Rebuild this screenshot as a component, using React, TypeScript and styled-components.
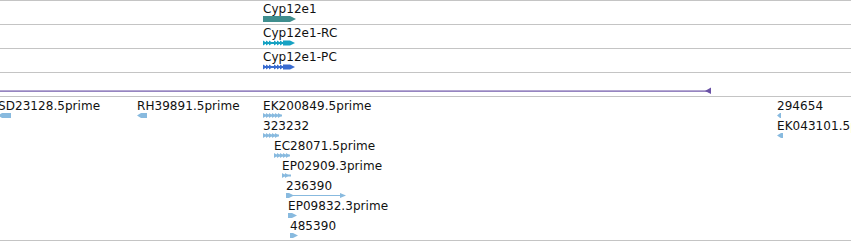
import React from "react";
import styled, { createGlobalStyle } from "styled-components";

const GlobalStyle = createGlobalStyle`
  html, body { margin: 0; padding: 0; background: #ffffff; }
  body {
    width: 851px;
    height: 241px;
    overflow: hidden;
    font-family: "DejaVu Sans", "Liberation Sans", sans-serif;
  }
`;

const Browser = styled.div`
  width: 851px;
  height: 241px;
  overflow: hidden;
  display: flex;
  flex-direction: column;
  border-top: 1px solid #c4c4c4;
  box-sizing: border-box;
`;

const Track = styled.div<{ $height: number }>`
  position: relative;
  flex: none;
  height: ${(p) => p.$height}px;
  border-bottom: 1px solid #c4c4c4;
  overflow: hidden;
`;

const Feature = styled.div<{ $x: number; $top: number }>`
  position: absolute;
  left: ${(p) => p.$x}px;
  top: ${(p) => p.$top}px;
  display: flex;
  flex-direction: column;
  align-items: flex-start;
`;

const Label = styled.span`
  display: block;
  font-size: 12px;
  line-height: 14px;
  height: 14px;
  color: #111111;
  letter-spacing: 0.05px;
  white-space: nowrap;
`;

const GlyphSvg = styled.svg`
  display: block;
  flex: none;
`;

const LIGHT = "#88badf";

/* ---------- glyphs ---------- */

const GeneGlyph = ({ color }: { color: string }) => (
  <GlyphSvg width={34} height={6}>
    <path d="M0 0H27L33 3L27 6H0Z" fill={color} />
  </GlyphSvg>
);

const TranscriptGlyph = ({ color }: { color: string }) => (
  <GlyphSvg width={33} height={6}>
    <rect x={0} y={2} width={28} height={2} fill={color} />
    {[0, 3, 6, 11, 14, 17].map((i) => (
      <path key={i} d={`M${i} 0.5L${i + 4} 3L${i} 5.5Z`} fill={color} />
    ))}
    <path d="M20 0.5H27L32 3L27 5.5H20Z" fill={color} />
  </GlyphSvg>
);

const Chevrons = ({ w }: { w: number }) => {
  const items: number[] = [];
  for (let i = 0; i < w - 3; i += 3) items.push(i);
  return (
    <GlyphSvg width={w} height={5}>
      <rect x={0} y={1.5} width={w} height={2} fill={LIGHT} />
      {items.map((i) => (
        <path key={i} d={`M${i} 0L${i + 4} 2.5L${i} 5Z`} fill={LIGHT} />
      ))}
    </GlyphSvg>
  );
};

const LeftArrow = ({ w }: { w: number }) => (
  <GlyphSvg width={w} height={5}>
    <path d={`M0 2.5L${Math.min(4, w - 1)} 0H${w}V5H${Math.min(4, w - 1)}Z`} fill={LIGHT} />
  </GlyphSvg>
);

const RightArrow = ({ w }: { w: number }) => (
  <GlyphSvg width={w} height={5}>
    <path d={`M0 0H${w - 5}L${w} 2.5L${w - 5} 5H0Z`} fill={LIGHT} />
  </GlyphSvg>
);

const SpanGlyph = ({ w }: { w: number }) => (
  <GlyphSvg width={w} height={5}>
    <path d="M0 0H3L8 2.5L3 5H0Z" fill={LIGHT} />
    <rect x={7} y={2} width={w - 12} height={1} fill={LIGHT} />
    <path d={`M${w - 6} 0L${w} 2.5L${w - 6} 5Z`} fill={LIGHT} />
  </GlyphSvg>
);

const StrandLine = styled(GlyphSvg)`
  position: absolute;
  left: 0;
  top: 14px;
`;

/* ---------- data ---------- */

interface Feat {
  label: string;
  x: number;
  row: number;
  glyph: React.ReactNode;
}

const bottomFeatures: Feat[] = [
  { label: "SD23128.5prime", x: -2, row: 0, glyph: <LeftArrow w={13} /> },
  { label: "RH39891.5prime", x: 137, row: 0, glyph: <LeftArrow w={10} /> },
  { label: "EK200849.5prime", x: 263, row: 0, glyph: <Chevrons w={19} /> },
  { label: "323232", x: 263, row: 1, glyph: <Chevrons w={16} /> },
  { label: "EC28071.5prime", x: 274, row: 2, glyph: <Chevrons w={16} /> },
  { label: "EP02909.3prime", x: 282, row: 3, glyph: <Chevrons w={9} /> },
  { label: "236390", x: 286, row: 4, glyph: <SpanGlyph w={60} /> },
  { label: "EP09832.3prime", x: 288, row: 5, glyph: <RightArrow w={9} /> },
  { label: "485390", x: 290, row: 6, glyph: <RightArrow w={8} /> },
  { label: "294654", x: 777, row: 0, glyph: <LeftArrow w={4} /> },
  { label: "EK043101.5prime", x: 777, row: 1, glyph: <LeftArrow w={6} /> },
];

export default function App() {
  return (
    <>
      <GlobalStyle />
      <Browser>
        <Track $height={23}>
          <Feature $x={263} $top={1}>
            <Label>Cyp12e1</Label>
            <GeneGlyph color="#3f8e8e" />
          </Feature>
        </Track>
        <Track $height={23}>
          <Feature $x={263} $top={1}>
            <Label>Cyp12e1-RC</Label>
            <TranscriptGlyph color="#16a2c3" />
          </Feature>
        </Track>
        <Track $height={23}>
          <Feature $x={263} $top={1}>
            <Label>Cyp12e1-PC</Label>
            <TranscriptGlyph color="#386bd0" />
          </Feature>
        </Track>
        <Track $height={23}>
          <StrandLine width={712} height={7}>
            <rect x={0} y={3.5} width={707} height={1.2} fill="#6a52a6" />
            <path d="M705 4L711 0.5V7Z" fill="#6a52a6" />
          </StrandLine>
        </Track>
        <Track $height={143}>
          {bottomFeatures.map((f) => (
            <Feature key={f.label} $x={f.x} $top={2 + f.row * 20}>
              <Label>{f.label}</Label>
              {f.glyph}
            </Feature>
          ))}
        </Track>
      </Browser>
    </>
  );
}
